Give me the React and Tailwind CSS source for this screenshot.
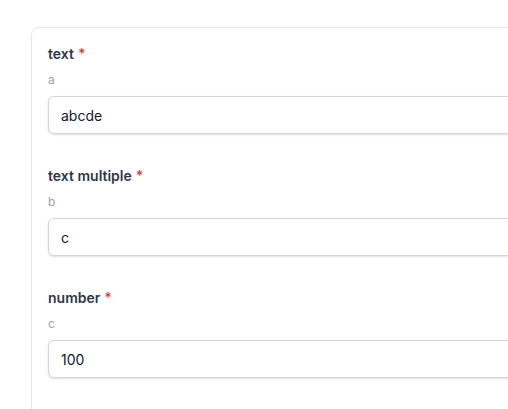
const FIELDS = [
  { label: 'text', hint: 'a', value: 'abcde' },
  { label: 'text multiple', hint: 'b', value: 'c' },
  { label: 'number', hint: 'c', value: '100' },
];

const Field = ({ label, hint, value }) => (
  <div>
    <label className="block text-sm leading-5 font-semibold text-[#2d3748]">
      {label}
      <span className="ml-1 text-[#e53e3e]">*</span>
    </label>
    <p className="mt-2 text-xs leading-4 text-gray-400">{hint}</p>
    <input
      readOnly
      value={value}
      className="mt-2 block w-full h-[38px] px-3 text-sm text-gray-900 bg-white border border-gray-300 rounded-md shadow-sm outline-none"
    />
  </div>
);

export default function App() {
  return (
    <div
      className="h-[409px] w-[508px] overflow-hidden bg-white"
      style={{ fontFamily: 'Inter, "Noto Sans", sans-serif' }}
    >
      <div className="ml-[31px] mt-[27px] w-[600px] h-[500px] rounded-lg border border-gray-200 bg-white p-4 space-y-8">
        {FIELDS.map((f) => (
          <Field key={f.label} {...f} />
        ))}
      </div>
    </div>
  );
}
